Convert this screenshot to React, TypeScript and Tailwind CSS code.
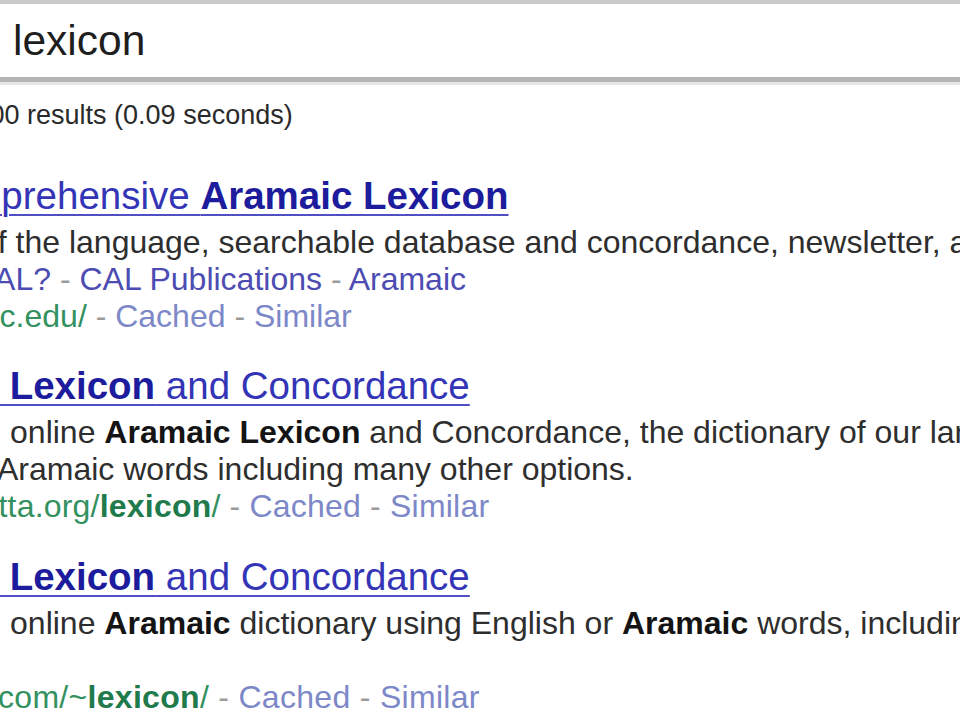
import React from 'react';

const sep = <span className="text-[#9a9a9a]"> - </span>;

function Title({ children }: { children: React.ReactNode }) {
  return (
    <div className="h-[50px] leading-[50px] text-[38.5px] whitespace-nowrap">
      <a className="text-[#3434b6] underline decoration-[2px] underline-offset-[5px] decoration-[#5050c4]">
        {children}
      </a>
    </div>
  );
}

function Line({ className = '', children }: { className?: string; children: React.ReactNode }) {
  return <div className={`h-[37px] leading-[37px] whitespace-nowrap ${className}`}>{children}</div>;
}

function Cached() {
  return (
    <>
      {sep}
      <span className="text-[#7c88c8]">Cached</span>
      {sep}
      <span className="text-[#7c88c8]">Similar</span>
    </>
  );
}

export default function App() {
  return (
    <div
      className="w-[960px] h-[720px] overflow-hidden bg-white"
      style={{ fontFamily: '"Liberation Sans", Arial, sans-serif' }}
    >
      {/* search box */}
      <div className="border-t-4 border-[#cbcbcb] border-b-[5px] border-b-[#b4b4b4] h-[82px] bg-white">
        <div className="h-[73px] leading-[73px] pl-[13px] text-[42.5px] text-[#1e1e1e]">lexicon</div>
      </div>
      <div className="h-[3px] bg-[#e6e6e6]" />

      <div className="mt-[12px] h-[36px] leading-[36px] text-[27px] text-[#2a2a2a] whitespace-nowrap ml-[-48px]">
        1,000 results (0.09 seconds)
      </div>

      <div className="mt-[38px] text-[32px] text-[#2e2e2e]">
        {/* result 1 */}
        <div className="ml-[-157px]">
          <Title>
            The Comprehensive <b className="text-[#1c1c9c]">Aramaic Lexicon</b>
          </Title>
        </div>
        <div className="mt-[3px]">
          <Line className="ml-[-20px]">of the language, searchable database and concordance, newsletter, and more</Line>
          <Line className="ml-[-29px] text-[#4c4cb2]">
            CAL?{sep}CAL Publications{sep}Aramaic
          </Line>
          <Line className="ml-[-36px]">
            <span className="text-[#33915f]">huc.edu/</span>
            <Cached />
          </Line>
        </div>

        {/* result 2 */}
        <div className="mt-[26px] ml-[-153px]">
          <Title>
            <b className="text-[#1c1c9c]">Aramaic Lexicon</b> and Concordance
          </Title>
        </div>
        <div className="mt-[3px]">
          <Line className="ml-[-54px]">
            The online <b className="text-[#141414]">Aramaic Lexicon</b> and Concordance, the dictionary of our language
          </Line>
          <Line className="ml-[-3px]">Aramaic words including many other options.</Line>
          <Line className="ml-[-79px] tracking-[0.2px]">
            <span className="text-[#33915f]">
              peshitta.org/<b className="text-[#1f7a4c]">lexicon</b>/
            </span>
            <Cached />
          </Line>
        </div>

        {/* result 3 */}
        <div className="mt-[27px] ml-[-153px]">
          <Title>
            <b className="text-[#1c1c9c]">Aramaic Lexicon</b> and Concordance
          </Title>
        </div>
        <div className="mt-[3px]">
          <Line className="ml-[-54px]">
            The online <b className="text-[#141414]">Aramaic</b> dictionary using English or{' '}
            <b className="text-[#141414]">Aramaic</b> words, including
          </Line>
          <Line>&nbsp;</Line>
          <Line className="ml-[-2px] tracking-[0.3px]">
            <span className="text-[#33915f]">
              com/~<b className="text-[#1f7a4c]">lexicon</b>/
            </span>
            <Cached />
          </Line>
        </div>
      </div>
    </div>
  );
}
